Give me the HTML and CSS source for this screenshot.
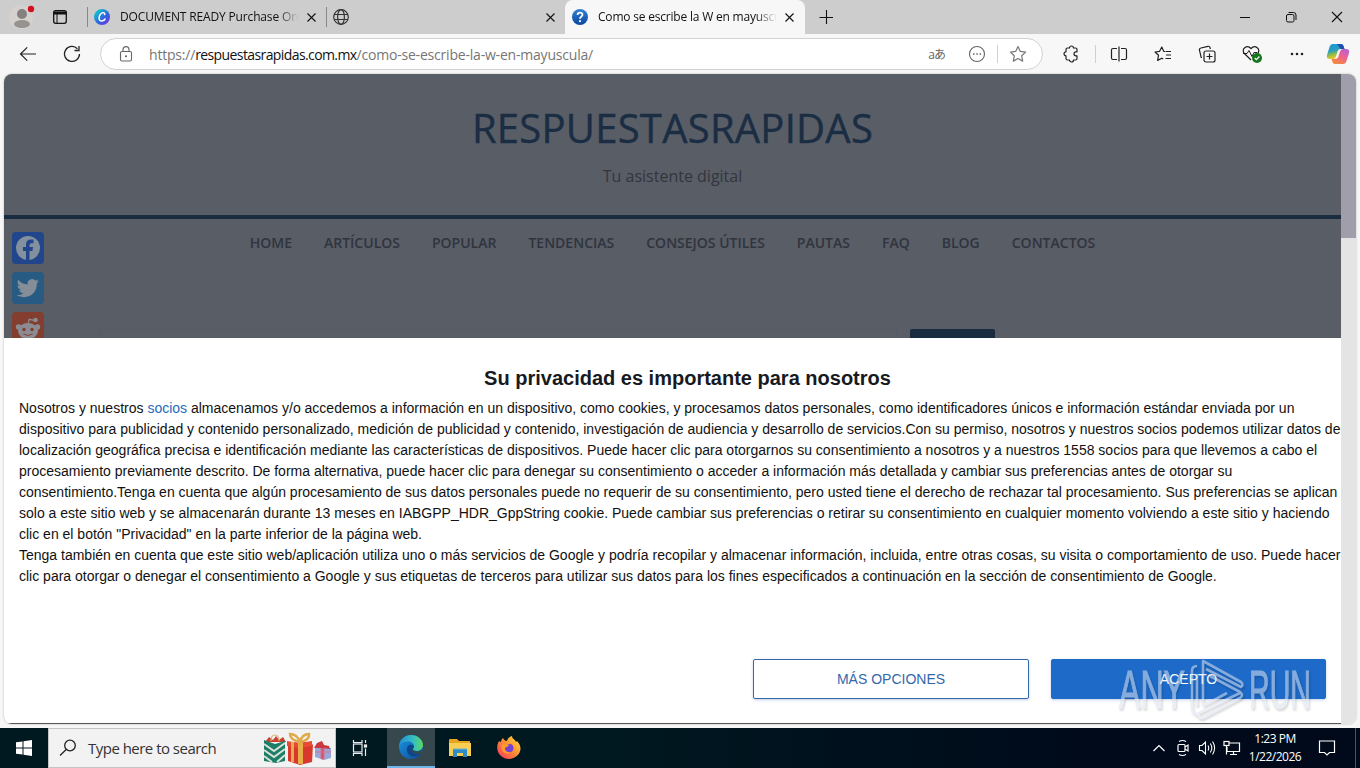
FILE: index.html
```html
<!DOCTYPE html>
<html lang="es">
<head>
    <meta charset="UTF-8">
    <title>Como se escribe la W en mayuscula</title>
    <link rel="stylesheet" href="styles.css">
</head>
<body>
    <div class="tabs">
        <div class="profile">
            <svg width="28" height="28" viewBox="0 0 28 28"><circle cx="13" cy="14" r="12" fill="#d4d1ce"/><circle cx="14" cy="11" r="5" fill="#85817e"/><ellipse cx="14" cy="21" rx="8" ry="4" fill="#96928e"/><circle cx="23" cy="6" r="3.2" fill="#d5101e"/></svg>
        </div>
        <div class="workspace">
            <svg width="16" height="16" viewBox="0 0 16 16"><rect x="1.7" y="1.7" width="12.6" height="12.6" rx="2" fill="none" stroke="#111" stroke-width="1.3"/><path d="M1.5 2.5h13v3h-13z" fill="#111"/><path d="M5 5v9" stroke="#111"/></svg>
        </div>
        <div class="tab">
            <svg width="16" height="16" viewBox="0 0 16 16"><defs><linearGradient id="canva" x1="0" y1="0" x2="1" y2="1"><stop offset=".15" stop-color="#14bfd0"/><stop offset=".6" stop-color="#315fdf"/><stop offset="1" stop-color="#832ddc"/></linearGradient></defs><circle cx="8" cy="8" r="8" fill="url(#canva)"/><path d="M10.700 5.600C11 4 9.600 3.300 8.100 3.900 5.400 5 4.100 9.300 5.800 11.200c1.600 1.500 4.100.6 5.200-1.200" fill="none" stroke="#fff" stroke-width="1.500" stroke-linecap="round"/></svg>
            <span class="tab-title first">DOCUMENT READY Purchase Order</span>
            <svg class="close" width="9" height="9" viewBox="0 0 9 9"><path d="M.5.5l8 8M8.500.5l-8 8" stroke="#111" stroke-width="1.1"/></svg>
        </div>
        <div class="tab globe-tab">
            <svg width="16" height="16" viewBox="0 0 16 16" fill="none" stroke="#333" stroke-width="1.2"><circle cx="8" cy="8" r="7.3"/><ellipse cx="8" cy="8" rx="3.4" ry="7.3"/><path d="M1.300 5.500h13.4M1.300 10.500h13.4"/></svg>
            <span class="tab-title"></span>
            <svg class="close" width="9" height="9" viewBox="0 0 9 9"><path d="M.5.5l8 8M8.500.5l-8 8" stroke="#111" stroke-width="1.1"/></svg>
        </div>
        <div class="tab active">
            <svg width="16" height="16" viewBox="0 0 16 16"><defs><linearGradient id="help" x1="0" y1="0" x2="0" y2="1"><stop stop-color="#3582d1"/><stop offset="1" stop-color="#0747a0"/></linearGradient></defs><circle cx="8" cy="8" r="8" fill="url(#help)"/><path d="M5.500 5.900C5.700 2.900 10.600 2.900 10.500 5.800 10.400 7.600 8.100 7.600 8 9.700" fill="none" stroke="#fff" stroke-width="1.8"/><circle cx="8" cy="12.200" r="1.100" fill="#fff"/></svg>
            <span class="tab-title second">Como se escribe la W en mayuscula</span>
            <svg class="close" width="9" height="9" viewBox="0 0 9 9"><path d="M.5.5l8 8M8.500.5l-8 8" stroke="#111" stroke-width="1.1"/></svg>
        </div>
        <svg class="new-tab" width="14" height="14" viewBox="0 0 14 14"><path d="M7.500 0v14M.5 7.500h14" stroke="#111" stroke-width="1.1"/></svg>
        <div class="window-buttons">
            <svg width="12" height="12" viewBox="0 0 12 12"><path d="M1 6.500h10" stroke="#111"/></svg>
            <svg width="12" height="12" viewBox="0 0 12 12" fill="none" stroke="#111"><rect x="1.500" y="3.500" width="7.500" height="7.500" rx="1.500"/><path d="M3.500 1.500h5q2.500 0 2.500 2.500v5"/></svg>
            <svg width="12" height="12" viewBox="0 0 12 12"><path d="M1 1l10 10M11 1L1 11" stroke="#111" stroke-width="1.100"/></svg>
        </div>
    </div>

    <div class="toolbar">
        <div class="nav-button"><svg width="18" height="16" viewBox="0 0 18 16" fill="none" stroke="#222" stroke-width="1.200"><path d="M17 8H1.500M8.200 1.300L1.500 8l6.700 6.700"/></svg></div>
        <div class="nav-button"><svg width="18" height="18" viewBox="0 0 18 18" fill="none" stroke="#222" stroke-width="1.300"><path d="M14.400 3.700A7.500 7.500 0 1 0 16.500 9M16 1v4.500h-4.500"/></svg></div>
        <div class="address">
            <svg class="lock" width="14" height="16" viewBox="0 0 14 16" fill="none" stroke="#666" stroke-width="1.100"><rect x="1.500" y="5.500" width="11" height="9.500" rx="1.500"/><path d="M4 5.500V3.600a3 3 0 0 1 6 0v1.900"/><circle cx="7" cy="10.300" r=".5" fill="#666"/></svg>
            <span class="url">https://<b>respuestasrapidas.com.mx</b>/como-se-escribe-la-w-en-mayuscula/</span>
            <span class="translate">aあ</span>
            <svg class="dots" width="18" height="18" viewBox="0 0 18 18"><circle cx="9" cy="9" r="7.500" fill="none" stroke="#666" stroke-width="1.100"/><path d="M5 9h1.500M8.300 9h1.500M11.600 9h1.500" stroke="#666" stroke-width="1.500"/></svg>
            <i class="divider"></i>
            <svg width="18" height="18" viewBox="0 0 18 18" fill="none" stroke="#777" stroke-width="1.200" stroke-linejoin="round"><path d="M9 1.500l2.300 4.900 5.300.7-3.900 3.700 1 5.300L9 13.500l-4.700 2.600 1-5.300-3.900-3.700 5.300-.7z"/></svg>
        </div>
        <div class="tools">
            <svg width="18" height="18" viewBox="0 0 18 18" fill="none" stroke="#222" stroke-width="1.200" stroke-linejoin="round"><path d="M4 4.500q0-1.500 1.500-1.500h2a2 2 0 1 1 4 0h2q1.500 0 1.500 1.500v2.300h-1a2 2 0 0 0 0 4h1v2.700q0 1.500-1.500 1.500h-2a2 2 0 0 1-4 0h-2Q4 15 4 13.500v-2.700a2 2 0 1 1 0-4z"/></svg>
            <i class="divider"></i>
            <svg width="18" height="18" viewBox="0 0 18 18" fill="none" stroke="#222" stroke-width="1.200"><path d="M7 3.500H3Q1.500 3.500 1.500 5v8q0 1.500 1.500 1.500h4M11 3.500h4q1.500 0 1.500 1.500v8q0 1.500-1.500 1.500h-4M9 1.500v15"/></svg>
            <svg width="18" height="18" viewBox="0 0 18 18" fill="none" stroke="#222" stroke-width="1.200" stroke-linejoin="round"><path d="M11.500 6.500H17M12 10h5M11.500 13.500H17M11 6.500L9.700 6.300 7.800 2 5.600 6.300 1 7l3.500 3.300-.9 5.100 4.200-2.200 1.400.8"/></svg>
            <svg width="18" height="18" viewBox="0 0 18 18" fill="none" stroke="#222" stroke-width="1.200"><rect x="6" y="6" width="11" height="11" rx="2"/><path d="M11.500 8.500v6M8.500 11.500h6M4 12.500H3.200L1.500 5.400Q1 3.500 3 3l7-1.700q1.500-.3 2 1.200l.4 1.500"/></svg>
            <svg width="20" height="18" viewBox="0 0 20 18"><path d="M9 15L2.400 8.500C-1.500 4 5-.8 9 3.500c4-4.300 10.500.5 6.600 5" fill="none" stroke="#222" stroke-width="1.200"/><path d="M1 8.500h4l2-3 3 6 2-4h3" fill="none" stroke="#222"/><circle cx="15" cy="13" r="5" fill="#13751d"/><path d="M12.700 13l1.700 1.700 3-3.200" fill="none" stroke="#fff" stroke-width="1.200"/></svg>
            <svg width="18" height="18" viewBox="0 0 18 18" fill="#222"><circle cx="4" cy="9" r="1.300"/><circle cx="9" cy="9" r="1.300"/><circle cx="14" cy="9" r="1.300"/></svg>
            <svg class="copilot" width="24" height="24" viewBox="0 0 24 24"><defs><linearGradient id="cool" x1="0" y1="0" x2=".3" y2="1"><stop stop-color="#1597dc"/><stop offset=".5" stop-color="#2c9fbd"/><stop offset=".75" stop-color="#99bf3f"/><stop offset="1" stop-color="#f1c72a"/></linearGradient><linearGradient id="warm" x1="1" y1="0" x2=".4" y2="1"><stop stop-color="#aa63e0"/><stop offset=".5" stop-color="#ec6098"/><stop offset="1" stop-color="#f48741"/></linearGradient></defs><path d="M7 2h8q2 0 2.500 2l1 3h-4q-2 0-2.700 2l-2 6Q9 17 7 17H4q-4 0-3-4L3.500 5Q4.500 2 7 2z" fill="url(#cool)"/><path d="M17 22H9q-2 0-2.500-2l-1-3h4q2 0 2.700-2l2-6Q15 7 17 7h3q4 0 3 4l-2.500 8q-1 3-3.500 3z" fill="url(#warm)"/><path d="M11 2h4q2 0 2.500 2l1 3h-4z" fill="#1c51b2"/></svg>
        </div>
    </div>

    <div class="viewport">
        <div class="page">
            <div class="site">
                <header>
                    <h1>RESPUESTASRAPIDAS</h1>
                    <p>Tu asistente digital</p>
                </header>
                <div class="site-body">
                    <nav>
                        <a>HOME</a><a>ARTÍCULOS</a><a>POPULAR</a><a>TENDENCIAS</a><a>CONSEJOS ÚTILES</a><a>PAUTAS</a><a>FAQ</a><a>BLOG</a><a>CONTACTOS</a>
                    </nav>
                    <div class="share">
                        <svg width="32" height="32" viewBox="0 0 32 32"><rect width="32" height="32" rx="4" fill="#21468c"/><circle cx="16" cy="16" r="12" fill="#84909e"/><path d="M14 28v-9h-3v-4h3v-2.500q0-5 5-5h2.500v3.700h-2q-2 0-2 2V15h3.500l-.6 4h-2.900v9" fill="#21468c"/></svg>
                        <svg width="32" height="32" viewBox="0 0 32 32"><rect width="32" height="32" rx="4" fill="#275b83"/><path d="M27 9c-.8.400-1.700.6-2.500.7.9-.6 1.600-1.400 1.900-2.400-.9.500-1.900.9-2.900 1.100a4.600 4.600 0 0 0-7.800 4.200C11.900 12.400 8.500 10.600 6.200 7.800c-1.200 2-.6 4.700 1.400 6.100-.8 0-1.500-.2-2.100-.6 0 2.100 1.500 4.100 3.700 4.600-.7.200-1.400.2-2.100.1.600 1.800 2.300 3.200 4.300 3.200A9.300 9.300 0 0 1 4.600 23c8.800 5.300 20.500.5 20.300-11.700.9-.6 1.600-1.400 2.100-2.300z" fill="#858d98"/></svg>
                        <svg width="32" height="32" viewBox="0 0 32 32"><rect width="32" height="32" rx="4" fill="#833e30"/><g fill="#8b8b91"><ellipse cx="16" cy="19" rx="10" ry="8"/><circle cx="6.500" cy="15" r="2.700"/><circle cx="25.500" cy="15" r="2.700"/><circle cx="23.500" cy="8" r="2.300"/></g><path d="M16 12l1.200-4.700 5 1" fill="none" stroke="#8b8b91" stroke-width="1.200"/><circle cx="12" cy="17.500" r="1.700" fill="#833e30"/><circle cx="20" cy="17.500" r="1.700" fill="#833e30"/><path d="M11.500 22q4.500 3 9 0" fill="none" stroke="#833e30"/></svg>
                    </div>
                    <div class="search-row"><span class="search-field"></span><span class="search-submit"></span></div>
                </div>
            </div>
            <section class="consent">
                <h2>Su privacidad es importante para nosotros</h2>
                <div class="consent-text">
                    Nosotros y nuestros <a>socios</a> almacenamos y/o accedemos a información en un dispositivo, como cookies, y procesamos datos personales, como identificadores únicos e información estándar enviada por un<br>
                    dispositivo para publicidad y contenido personalizado, medición de publicidad y contenido, investigación de audiencia y desarrollo de servicios.Con su permiso, nosotros y nuestros socios podemos utilizar datos de<br>
                    localización geográfica precisa e identificación mediante las características de dispositivos. Puede hacer clic para otorgarnos su consentimiento a nosotros y a nuestros 1558 socios para que llevemos a cabo el<br>
                    procesamiento previamente descrito. De forma alternativa, puede hacer clic para denegar su consentimiento o acceder a información más detallada y cambiar sus preferencias antes de otorgar su<br>
                    consentimiento.Tenga en cuenta que algún procesamiento de sus datos personales puede no requerir de su consentimiento, pero usted tiene el derecho de rechazar tal procesamiento. Sus preferencias se aplican<br>
                    solo a este sitio web y se almacenarán durante 13 meses en IABGPP_HDR_GppString cookie. Puede cambiar sus preferencias o retirar su consentimiento en cualquier momento volviendo a este sitio y haciendo<br>
                    clic en el botón "Privacidad" en la parte inferior de la página web.<br>
                    Tenga también en cuenta que este sitio web/aplicación utiliza uno o más servicios de Google y podría recopilar y almacenar información, incluida, entre otras cosas, su visita o comportamiento de uso. Puede hacer<br>
                    clic para otorgar o denegar el consentimiento a Google y sus etiquetas de terceros para utilizar sus datos para los fines especificados a continuación en la sección de consentimiento de Google.
                </div>
                <div class="consent-buttons">
                    <button>MÁS OPCIONES</button>
                    <button class="primary">ACEPTO</button>
                </div>
            </section>
        </div>
        <div class="scrollbar"><div class="thumb"></div></div>
    </div>

    <div class="taskbar">
        <div class="start"><svg width="16" height="16" viewBox="0 0 16 16" fill="#fff"><path d="M0 2.300l6.500-.9v6.100H0zM7.500 1.200L16 0v7.500H7.500zM0 8.500h6.500v6.100L0 13.700zM7.500 8.500H16V16l-8.500-1.200z"/></svg></div>
        <div class="search">
            <svg width="18" height="18" viewBox="0 0 18 18" fill="none" stroke="#222" stroke-width="1.300"><circle cx="11" cy="6.500" r="5.300"/><path d="M7.200 10.500L1 16.500"/></svg>
            <span>Type here to search</span>
            <svg class="gifts" width="70" height="34" viewBox="0 0 70 34">
                <path d="M2 11l4-5 4 3 3-4 3 4 4-3 3 5z" fill="#c94133"/><path d="M8 10q0-6 4-6t4 6" fill="none" stroke="#d9b26c" stroke-width="1.200"/>
                <path d="M1 9l11 4 10-3v20l-9 2-12-2z" fill="#1c7d69"/><path d="M1 13l10 7 11-8M1 19l10 7 11-8M1 25l8 6M14 31l8-7" fill="none" stroke="#dce4d8" stroke-width="2"/>
                <path d="M25 12l22-1 3 3-1 17-12 3-12-4z" fill="#d8392c"/><path d="M24 10l12 2 13-2v5l-13 2-12-2z" fill="#e84b35"/><path d="M35 12h5v21h-5zM28 11h3v20h-3z" fill="#e7ae4a"/><path d="M37 11Q27 9 27 3q7 0 10 8 2-8 9-8 1 6-9 8z" fill="none" stroke="#dfab4b" stroke-width="2.500"/>
                <path d="M52 17h16v10l-7 2-9-3z" fill="#96a8da"/><path d="M58 17h3v11h-3zM52 21h16" fill="#d84d6a" stroke="#d6738c"/><path d="M51 17l3-5 5-2 2 4 5 1 1 3-8-1z" fill="#ca3942"/>
            </svg>
        </div>
        <div class="task view"><svg width="18" height="18" viewBox="0 0 18 18" fill="none" stroke="#e8edef" stroke-width="1.200"><rect x="2.500" y="5" width="8.500" height="8"/><path d="M2.500 1v2.500H11V1M2.500 17v-2.500H11V17M14.500 1v3M14.500 9.500V17"/><rect x="13.500" y="6" width="2" height="2" fill="#fff"/></svg></div>
        <div class="task current"><svg width="26" height="26" viewBox="0 0 26 26"><defs><linearGradient id="edge-top" x1="0" y1=".5" x2="1" y2=".5"><stop stop-color="#238ed4"/><stop offset=".6" stop-color="#35bfc3"/><stop offset="1" stop-color="#5bd95b"/></linearGradient><linearGradient id="edge-low" x1="0" y1="0" x2="1" y2="1"><stop stop-color="#1994e2"/><stop offset="1" stop-color="#114b96"/></linearGradient></defs><circle cx="13" cy="13" r="12" fill="url(#edge-low)"/><path d="M1 12C2 5 7 1 13 1c7 0 12 5 12 10 0 5-5 7-9 5.500-2-1 0-1.500 0-4C16 6 5 6 1 12z" fill="url(#edge-top)"/><path d="M16 12c-4-3-8 0-7 5s7 8 14 3c-4 1-9 0-9-4 0-2 2-2 2-4z" fill="#0c478d"/><path d="M14.500 14c-.2 3.500 5 4.500 9 2.500l-.5 3c-4 1.500-9 0-9-3.500z" fill="#36474e"/></svg></div>
        <div class="task"><svg width="24" height="20" viewBox="0 0 24 20"><path d="M1 2q0-1 1-1h7l2 2h11v5H1z" fill="#e9a51e"/><path d="M1 5h22v13H1z" fill="#f8cf52"/><path d="M5 11h14v8h-4v-4H9v4H5z" fill="#318bc4"/><path d="M5 11h14" stroke="#70b2d8"/></svg></div>
        <div class="task"><svg width="26" height="26" viewBox="0 0 26 26"><defs><linearGradient id="fire" x1="1" y1="0" x2="0" y2="1"><stop stop-color="#ffe23b"/><stop offset=".45" stop-color="#ff9532"/><stop offset="1" stop-color="#f82d62"/></linearGradient></defs><path d="M3 6q1 1 2 1c0-2 1-3 2-4 1 2 2 3 4 3 0 0 1-4 5-5 0 3 3 3 4 6l1-1c8 8 1 18-8 18S-2 15 3 6z" fill="url(#fire)"/><path d="M9 12c2-2 3-3 5-3 4 0 5 6 1 8-4 1-7-2-6-5z" fill="#7542d2"/><path d="M6 10c2-2 5 0 7 0-1 2-4 2-4 3-1 3 3 5 6 4-4 4-11 0-9-7z" fill="#ff9c29"/></svg></div>
        <div class="tray">
            <svg class="expand" width="14" height="10" viewBox="0 0 14 10"><path d="M1.500 8L7 2.500 12.500 8" fill="none" stroke="#fff" stroke-width="1.200"/></svg>
            <svg width="16" height="18" viewBox="0 0 16 18" fill="none" stroke="#fff" stroke-width="1.200"><rect x="3" y="5.500" width="7" height="7" rx="1"/><path d="M10 8l3-2v6l-3-2M4 2.500q3.500-2 7 0M4 15.500q3.500 2 7 0"/></svg>
            <svg width="18" height="16" viewBox="0 0 18 16" fill="none" stroke="#fff" stroke-width="1.100"><path d="M1.500 5.500H4L7.500 2v12L4 10.500H1.500zM10 5.500q1.500 2.500 0 5M12.300 3.500q3 4.500 0 9M14.600 1.500q4 6.500 0 13"/></svg>
            <svg width="18" height="16" viewBox="0 0 18 16" fill="none" stroke="#fff" stroke-width="1.200"><path d="M6 3h10.500v8.500H4V7M7 14.500h7M10.500 11.500v3M3.500 5.500v9"/><rect x="1" y="1.500" width="5" height="4"/></svg>
            <div class="clock"><span>1:23 PM</span><span class="date">1/22/2026</span></div>
            <svg class="notice" width="18" height="18" viewBox="0 0 18 18"><path d="M1.500 2h15v11.500h-5L9 16l-2.500-2.500h-5z" fill="none" stroke="#fff" stroke-width="1.200"/></svg>
        </div>
        <div class="show-desktop"></div>
    </div>

    <svg class="watermark" width="204" height="70" viewBox="0 0 204 70">
        <g class="mark-letters">
            <text x="5" y="54" textLength="66" lengthAdjust="spacingAndGlyphs">ANY</text>
            <text x="135" y="54" textLength="62" lengthAdjust="spacingAndGlyphs">RUN</text>
        </g>
        <path class="mark-play" d="M83 12q-5 0-5 5v36q0 5 6 8M83 20v32M89 50V7l38 21q3 3 0 5L92 15M96 22l30 16q4 3 0 6L88 64q-4 0-3-5l41-20M89 52l24-13"/>
    </svg>
</body>
</html>
```
FILE: styles.css
```css
* {
    box-sizing: border-box;
}
body {
    margin: 0;
    width: 1360px;
    height: 768px;
    overflow: hidden;
    display: flex;
    flex-direction: column;
    background: #f7f7f7;
    font-family: "Open Sans", "Noto Sans CJK JP", sans-serif;
    color: #111;
}
svg {
    display: block;
    flex: none;
}

/* browser */
.tabs {
    height: 34px;
    flex: none;
    display: flex;
    align-items: center;
    background: #cdcdcd;
}
.profile {
    width: 44px;
    padding-left: 8px;
}
.workspace {
    width: 43px;
    padding-left: 8px;
}
.tab {
    width: 239px;
    height: 34px;
    padding: 0 10px 0 7px;
    display: flex;
    align-items: center;
    background: linear-gradient(#888, #888) left center / 1px 20px no-repeat;
}
.tab-title {
    flex: 1;
    min-width: 0;
    margin: 0 8px 0 10px;
    overflow: hidden;
    white-space: nowrap;
    font-size: 12px;
    line-height: 18px;
    letter-spacing: -0.2px;
    -webkit-mask-image: linear-gradient(90deg, #000 88%, transparent);
}
.tab-title.first {
    letter-spacing: -0.15px;
}
.tab.active {
    width: 240px;
    background: #f7f7f7;
    border-radius: 8px 8px 0 0;
    padding-right: 11px;
}
.new-tab {
    margin-left: 14px;
}
.window-buttons {
    margin-left: auto;
    display: flex;
    gap: 34px;
    padding-right: 17px;
}
.toolbar {
    height: 40px;
    flex: none;
    display: flex;
    align-items: center;
    padding-left: 6px;
}
.nav-button {
    width: 44px;
    display: flex;
    justify-content: center;
}
.address {
    width: 943px;
    height: 32px;
    margin-left: 6px;
    display: flex;
    align-items: center;
    padding: 0 15px 0 18px;
    background: #fff;
    border: 1px solid #d2d2d2;
    border-radius: 16px;
}
.url {
    margin-left: 16px;
    flex: 1;
    font-size: 14px;
    letter-spacing: -0.2px;
    color: #767676;
    white-space: nowrap;
}
.url b {
    font-weight: normal;
    letter-spacing: -0.6px;
    color: #111;
}
.translate {
    font-size: 12px;
    letter-spacing: -1px;
    color: #666;
}
.dots {
    margin-left: 23px;
}
.divider {
    width: 1px;
    height: 18px;
    background: #d0d0d0;
}
.address .divider {
    margin: 0 11px;
}
.tools {
    flex: 1;
    display: flex;
    align-items: center;
    gap: 26px;
    padding-left: 19px;
}
.tools .divider {
    margin: 0 -12px 0 -11px;
}
.copilot {
    margin-left: -6px;
}
.viewport {
    height: 650px;
    flex: none;
    margin: 0 4px;
    display: flex;
    overflow: hidden;
    border-radius: 8px;
    background: #fff;
    box-shadow: 0 0 2px #aaa;
}
.page {
    width: 1337px;
    border-bottom: 1px solid #55565b;
}
.scrollbar {
    width: 15px;
    background: #e4e4e4;
}
.thumb {
    height: 164px;
    background: #9f9eaa;
}

/* site */
.site {
    height: 264px;
    background: #585d66;
    overflow: hidden;
}
header {
    height: 145px;
    padding-top: 27px;
    text-align: center;
    border-bottom: 4px solid #1a2c40;
}
h1 {
    margin: 0;
    font-size: 40px;
    line-height: 54px;
    font-weight: normal;
    letter-spacing: 0.25px;
    color: #1a2d43;
    -webkit-text-stroke: 0.4px #1a2d43;
}
header p {
    margin: 10px 0 0;
    font-size: 16px;
    line-height: 22px;
    color: #33363f;
}
.site-body {
    position: relative;
}
nav {
    display: flex;
    justify-content: center;
    gap: 32px;
    padding-top: 14px;
    font-size: 14px;
    line-height: 20px;
    font-weight: 600;
    color: #30343e;
    white-space: nowrap;
}
.share {
    position: absolute;
    left: 8px;
    top: 13px;
    display: flex;
    flex-direction: column;
    gap: 8px;
}
.search-row {
    display: flex;
    gap: 13px;
    padding: 76px 0 0 96px;
}
.search-field {
    width: 797px;
    height: 20px;
    border: 1px solid #565a63;
}
.search-submit {
    width: 85px;
    height: 20px;
    background: #1a2c40;
    border-radius: 2px;
}

/* consent */
.consent {
    height: 385px;
    padding: 29px 0 0 15px;
    font-family: "Liberation Sans", Arial, sans-serif;
}
h2 {
    margin: 0;
    width: 1337px;
    font-size: 20px;
    line-height: 22px;
    text-align: center;
    color: #171a20;
}
.consent-text {
    margin-top: 9px;
    font-size: 14px;
    line-height: 21px;
    white-space: nowrap;
}
.consent-text a {
    color: #266abb;
}
.consent-buttons {
    display: flex;
    justify-content: flex-end;
    gap: 22px;
    padding: 72px 15px 0 0;
}
button {
    width: 276px;
    height: 40px;
    padding: 0;
    border: 1px solid #3468ad;
    border-radius: 2px;
    background: #fff;
    color: #3468ad;
    font: 14px "Liberation Sans", Arial, sans-serif;
    box-shadow: 0 1px 3px rgba(0, 60, 150, 0.25);
}
button.primary {
    width: 275px;
    border-color: #1d6ac9;
    background: #1d6ac9;
    color: #fff;
}

/* taskbar */
.taskbar {
    height: 40px;
    margin-top: 4px;
    flex: none;
    display: flex;
    background: linear-gradient(90deg, #001820 45%, #000a1a 80%);
}
.start,
.task {
    width: 48px;
    display: flex;
    align-items: center;
    justify-content: center;
}
.task {
    width: 49px;
}
.task.view {
    padding-right: 2px;
}
.task.current {
    margin-left: 2px;
    width: 48px;
    background: #36474e;
    border-bottom: 2px solid #70b5e9;
}
.search {
    width: 288px;
    display: flex;
    align-items: center;
    padding: 0 2px 0 10px;
    background: #f2f2f2;
    border: 1px solid #c4c4c4;
    font-size: 15px;
    letter-spacing: -0.52px;
    color: #333;
}
.search span {
    margin-left: 11px;
}
.gifts {
    margin-left: auto;
}
.tray {
    margin-left: auto;
    display: flex;
    align-items: center;
    gap: 7px;
    padding-right: 19px;
    color: #fff;
}
.expand {
    margin-right: 2px;
}
.clock {
    width: 54px;
    display: flex;
    flex-direction: column;
    align-items: center;
    font-size: 12px;
    line-height: 18px;
    letter-spacing: -0.5px;
    white-space: nowrap;
}
.notice {
    margin-left: 9px;
}
.show-desktop {
    width: 5px;
    border-left: 1px solid #4d535e;
}

/* stamp over the desktop */
.watermark {
    position: absolute;
    left: 1114px;
    top: 654px;
    filter: drop-shadow(1px 2px 1px rgba(0, 0, 0, 0.3));
    opacity: 0.55;
}
.mark-letters {
    font: 54px "Liberation Sans", Arial, sans-serif;
    fill: #dbe3ed;
    stroke: #dbe3ed;
    stroke-width: 1.2;
}
.mark-play {
    fill: none;
    stroke: #dbe3ed;
    stroke-width: 2.6;
    stroke-linejoin: round;
}
```
